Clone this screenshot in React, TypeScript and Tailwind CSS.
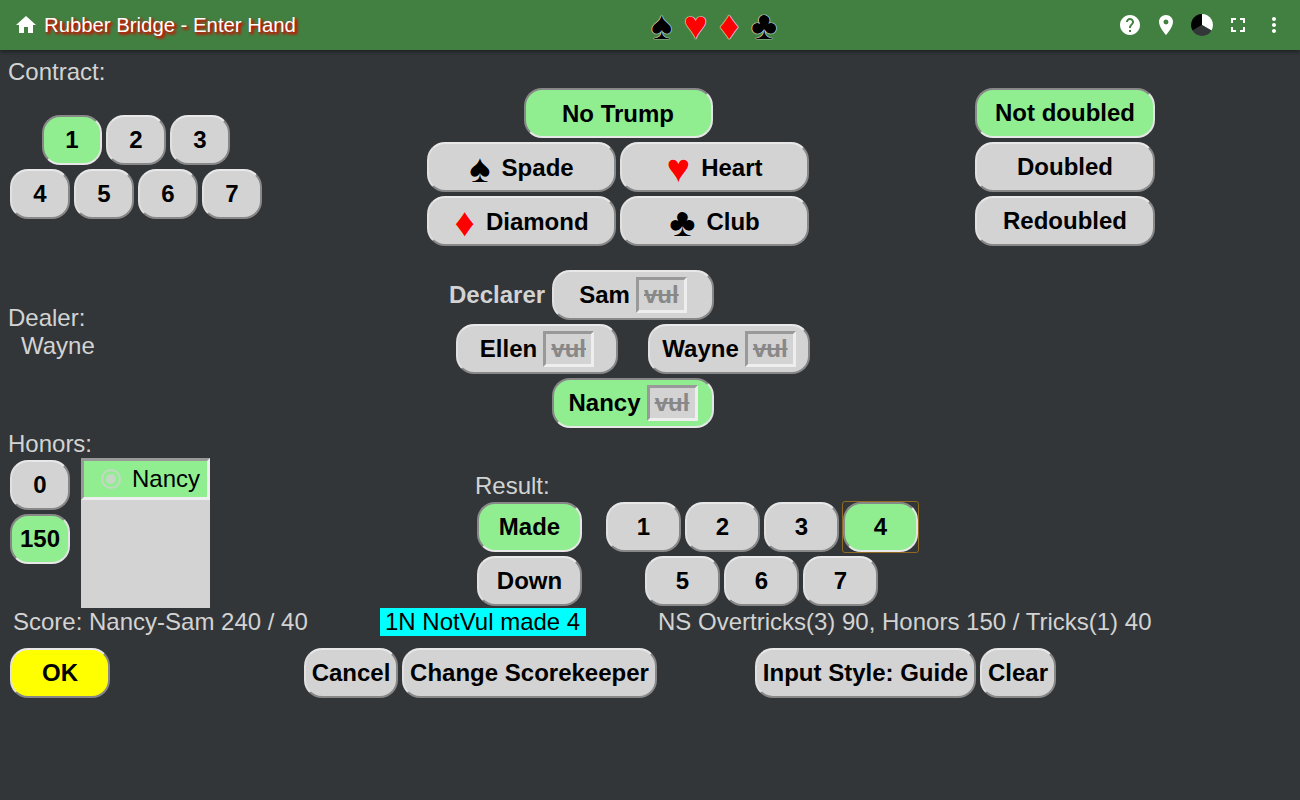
import React from "react";
import { MdHome, MdHelp, MdPlace, MdFullscreen, MdMoreVert } from "react-icons/md";

type BtnProps = {
  w: string;
  on?: boolean;
  yellow?: boolean;
  low?: boolean;
  children: React.ReactNode;
};

function Btn({ w, on, yellow, low, children }: BtnProps) {
  const look = yellow
    ? "bg-[#ffff00] border-t-[#e8e8e8] border-l-[#e0e0e0] border-r-[#888888] border-b-[#888888]"
    : on
      ? "bg-[#90ee90] border-t-[#888888] border-l-[#888888] border-r-[#e4e4e4] border-b-[#e8e8e8]"
      : "bg-[#d3d3d3] border-t-[#e8e8e8] border-l-[#e0e0e0] border-r-[#888888] border-b-[#888888]";
  return (
    <div
      className={`${w} ${look} ${low ? "pt-[2px]" : ""} h-[50px] shrink-0 flex items-center justify-center rounded-[18px] border-2 border-solid text-[24px] font-bold text-black whitespace-nowrap`}
    >
      {children}
    </div>
  );
}

function Suit({ glyph, red }: { glyph: string; red?: boolean }) {
  return (
    <span
      className={`text-[40px] leading-[40px] font-normal mr-[11px] ${
        red ? "text-[#ff0000] [text-shadow:0_0_1px_#ffffff]" : "text-black [text-shadow:0_0_1px_#ffffff]"
      }`}
    >
      {glyph}
    </span>
  );
}

function Vul() {
  return (
    <span className="ml-[6px] inline-flex h-[36px] w-[51px] items-center justify-center border-[3px] border-solid border-t-[#999999] border-l-[#999999] border-r-[#eeeeee] border-b-[#eeeeee] bg-[#d3d3d3] text-[#888888] line-through">
      vul
    </span>
  );
}

function HeadSuit({ glyph, red }: { glyph: string; red?: boolean }) {
  return (
    <span
      className={`text-[40px] leading-[48px] [text-shadow:0_0_1px_#ffffff,0_0_1px_#ffffff,0_0_1px_#ffffff] ${
        red ? "text-[#ff0000]" : "text-black"
      }`}
    >
      {glyph}
    </span>
  );
}

function Pie() {
  return (
    <svg width="24" height="24" viewBox="0 0 24 24">
      <path d="M12 12 L12 1 A11 11 0 0 1 21.5 17.5 Z" fill="#ffffff" />
      <path d="M12 12 L21.5 17.5 A11 11 0 0 1 2.5 17.5 Z" fill="#323639" />
      <path d="M12 12 L2.5 17.5 A11 11 0 0 1 12 1 Z" fill="#000000" />
    </svg>
  );
}

export default function App() {
  return (
    <div className="min-h-screen bg-[#323639] text-[24px] leading-[28px] text-[#d3d3d3] [font-family:'Liberation_Sans',sans-serif]">
      <header className="relative flex h-[50px] items-center bg-[#428042] pl-[14px] pr-[14px] shadow-[0_2px_4px_rgba(0,0,0,0.4)]">
        <MdHome className="h-[24px] w-[24px] text-white" />
        <div className="ml-[6px] w-[607px] text-[20.32px] text-white [text-shadow:2px_2px_3px_#cc1100,2px_2px_3px_#cc1100]">
          Rubber Bridge - Enter Hand
        </div>
        <div className="flex w-[140px] items-center gap-[11.5px]">
          <HeadSuit glyph="♠" />
          <HeadSuit glyph="♥" red />
          <HeadSuit glyph="♦" red />
          <HeadSuit glyph="♣" />
        </div>
        <div className="ml-auto flex items-center gap-[12px] text-white">
          <MdHelp className="h-[24px] w-[24px]" />
          <MdPlace className="h-[24px] w-[24px]" />
          <Pie />
          <MdFullscreen className="h-[24px] w-[24px]" />
          <MdMoreVert className="h-[24px] w-[24px]" />
        </div>
      </header>

      <section className="flex h-[200px]">
        <div className="w-[427px] pl-[8px] pt-[8px]">
          <div>Contract:</div>
          <div className="mt-[29px] ml-[34px] flex gap-[4px]">
            <Btn w="w-[60px]" on>1</Btn>
            <Btn w="w-[60px]">2</Btn>
            <Btn w="w-[60px]">3</Btn>
          </div>
          <div className="mt-[4px] ml-[2px] flex gap-[4px]">
            <Btn w="w-[60px]">4</Btn>
            <Btn w="w-[60px]">5</Btn>
            <Btn w="w-[60px]">6</Btn>
            <Btn w="w-[60px]">7</Btn>
          </div>
        </div>
        <div className="w-[548px] pt-[38px]">
          <div className="flex w-[382px] justify-center">
            <Btn w="w-[189px]" on low>No Trump</Btn>
          </div>
          <div className="mt-[4px] flex gap-[4px]">
            <Btn w="w-[189px]" low><Suit glyph="♠" />Spade</Btn>
            <Btn w="w-[189px]" low><Suit glyph="♥" red />Heart</Btn>
          </div>
          <div className="mt-[4px] flex gap-[4px]">
            <Btn w="w-[189px]" low><Suit glyph="♦" red />Diamond</Btn>
            <Btn w="w-[189px]" low><Suit glyph="♣" />Club</Btn>
          </div>
        </div>
        <div className="flex flex-col gap-[4px] pt-[38px]">
          <Btn w="w-[180px]" on>Not doubled</Btn>
          <Btn w="w-[180px]">Doubled</Btn>
          <Btn w="w-[180px]">Redoubled</Btn>
        </div>
      </section>

      <section className="flex h-[180px]">
        <div className="w-[449px] pl-[8px] pt-[54px]">
          <div>Dealer:</div>
          <div className="pl-[13px]">Wayne</div>
        </div>
        <div className="pt-[20px]">
          <div className="flex items-center">
            <span className="w-[103px] font-bold">Declarer</span>
            <Btn w="w-[162px]">Sam<Vul /></Btn>
          </div>
          <div className="mt-[4px] ml-[7px] flex gap-[30px]">
            <Btn w="w-[162px]">Ellen<Vul /></Btn>
            <Btn w="w-[162px]">Wayne<Vul /></Btn>
          </div>
          <div className="mt-[4px] ml-[103px]">
            <Btn w="w-[162px]" on>Nancy<Vul /></Btn>
          </div>
        </div>
      </section>

      <section className="flex h-[178px]">
        <div className="w-[475px] pl-[8px]">
          <div>Honors:</div>
          <div className="flex">
            <div className="ml-[2px] flex flex-col gap-[4px] pt-[2px]">
              <Btn w="w-[60px]">0</Btn>
              <Btn w="w-[60px]" on>150</Btn>
            </div>
            <div className="ml-[11px] h-[150px] w-[129px] bg-[#d3d3d3]">
              <div className="flex h-[42px] items-center border-[3px] border-solid border-t-[#999999] border-l-[#999999] border-r-[#eeeeee] border-b-[#eeeeee] bg-[#90ee90] pl-[17px] text-black">
                <span className="flex h-[20px] w-[20px] items-center justify-center rounded-full border-2 border-[#c4d8c4]">
                  <span className="h-[10px] w-[10px] rounded-full bg-[#c4d8c4]" />
                </span>
                <span className="ml-[11px]">Nancy</span>
              </div>
            </div>
          </div>
        </div>
        <div className="pt-[42px]">
          <div>Result:</div>
          <div className="mt-[2px] flex">
            <div className="ml-[2px] flex w-[129px] flex-col gap-[4px]">
              <Btn w="w-[105px]" on>Made</Btn>
              <Btn w="w-[105px]">Down</Btn>
            </div>
            <div className="w-[312px]">
              <div className="flex gap-[4px]">
                <Btn w="w-[75px]">1</Btn>
                <Btn w="w-[75px]">2</Btn>
                <Btn w="w-[75px]">3</Btn>
                <div className="rounded-[2px] outline outline-1 outline-[#8f6a20]">
                  <Btn w="w-[75px]" on>4</Btn>
                </div>
              </div>
              <div className="mt-[4px] ml-[39px] flex gap-[4px]">
                <Btn w="w-[75px]">5</Btn>
                <Btn w="w-[75px]">6</Btn>
                <Btn w="w-[75px]">7</Btn>
              </div>
            </div>
          </div>
        </div>
      </section>

      <section className="flex h-[28px]">
        <div className="w-[380px] pl-[13px]">Score: Nancy-Sam 240 / 40</div>
        <div className="w-[206px] bg-[#00ffff] pl-[5px] text-black">1N NotVul made 4</div>
        <div className="ml-[72px]">NS Overtricks(3) 90, Honors 150 / Tricks(1) 40</div>
      </section>

      <section className="mt-[12px] flex">
        <div className="ml-[10px]">
          <Btn w="w-[100px]" yellow>OK</Btn>
        </div>
        <div className="ml-[194px] flex gap-[4px]">
          <Btn w="w-[94px]">Cancel</Btn>
          <Btn w="w-[255px]">Change Scorekeeper</Btn>
        </div>
        <div className="ml-[98px] flex gap-[4px]">
          <Btn w="w-[221px]">Input Style: Guide</Btn>
          <Btn w="w-[76px]">Clear</Btn>
        </div>
      </section>
    </div>
  );
}
